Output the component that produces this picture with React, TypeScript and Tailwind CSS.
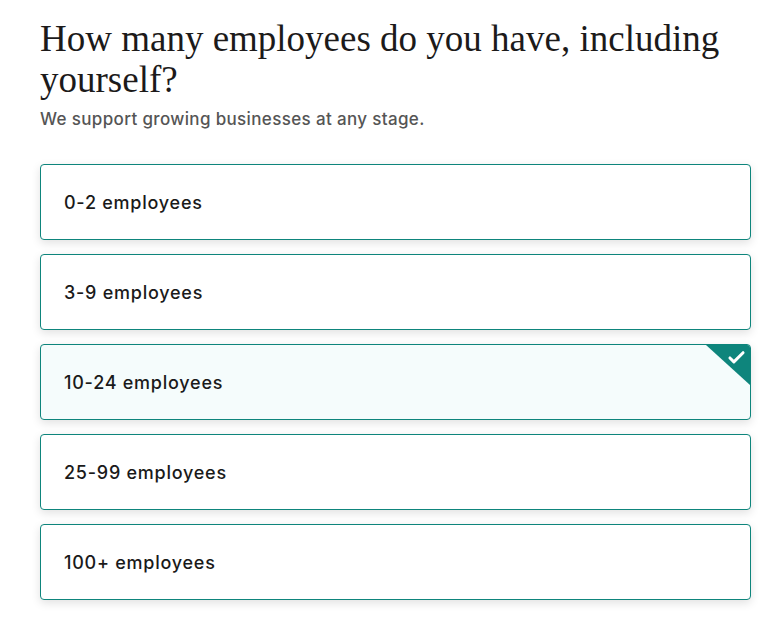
import React from "react";

const options = ["0-2 employees", "3-9 employees", "10-24 employees", "25-99 employees", "100+ employees"];

export default function App() {
  const selected = 2;
  return (
    <div className="min-h-[630px] w-[783px] bg-white pl-[40px] pr-[32px] pt-[18px]">
      <h1
        className="text-[37px] leading-[41px] text-[#1c1a1a]"
        style={{ fontFamily: '"Liberation Serif", serif' }}
      >
        How many employees do you have, including yourself?
      </h1>
      <p
        className="mt-[7px] text-[17px] leading-[24px] tracking-[0.35px] text-[#555555] font-medium"
        style={{ fontFamily: 'Inter, sans-serif' }}
      >
        We support growing businesses at any stage.
      </p>
      <div className="mt-[33px] flex flex-col gap-[14px]">
        {options.map((o, i) => (
          <div
            key={o}
            className={`relative h-[76px] overflow-hidden rounded-[4px] border border-[#0e857c] flex items-center pl-[23px] shadow-[0_3px_10px_rgba(0,0,0,0.12)] ${
              i === selected ? "bg-[#f5fcfc]" : "bg-white"
            }`}
          >
            <span
              className="text-[18px] font-medium tracking-[0.75px] text-[#1a1a1a]"
              style={{ fontFamily: 'Inter, sans-serif' }}
            >
              {o}
            </span>
            {i === selected && (
              <div className="absolute right-0 top-0 h-[40px] w-[44px] bg-[#0e857c] [clip-path:polygon(0_0,100%_0,100%_100%)]">
                <svg viewBox="0 0 24 24" className="absolute right-[3px] top-[2px] h-[21px] w-[21px]" fill="none" stroke="white" strokeWidth="3.4" strokeLinecap="round" strokeLinejoin="round">
                  <path d="M4.5 12.5l4.5 4.5L19.5 6.5" />
                </svg>
              </div>
            )}
          </div>
        ))}
      </div>
    </div>
  );
}
